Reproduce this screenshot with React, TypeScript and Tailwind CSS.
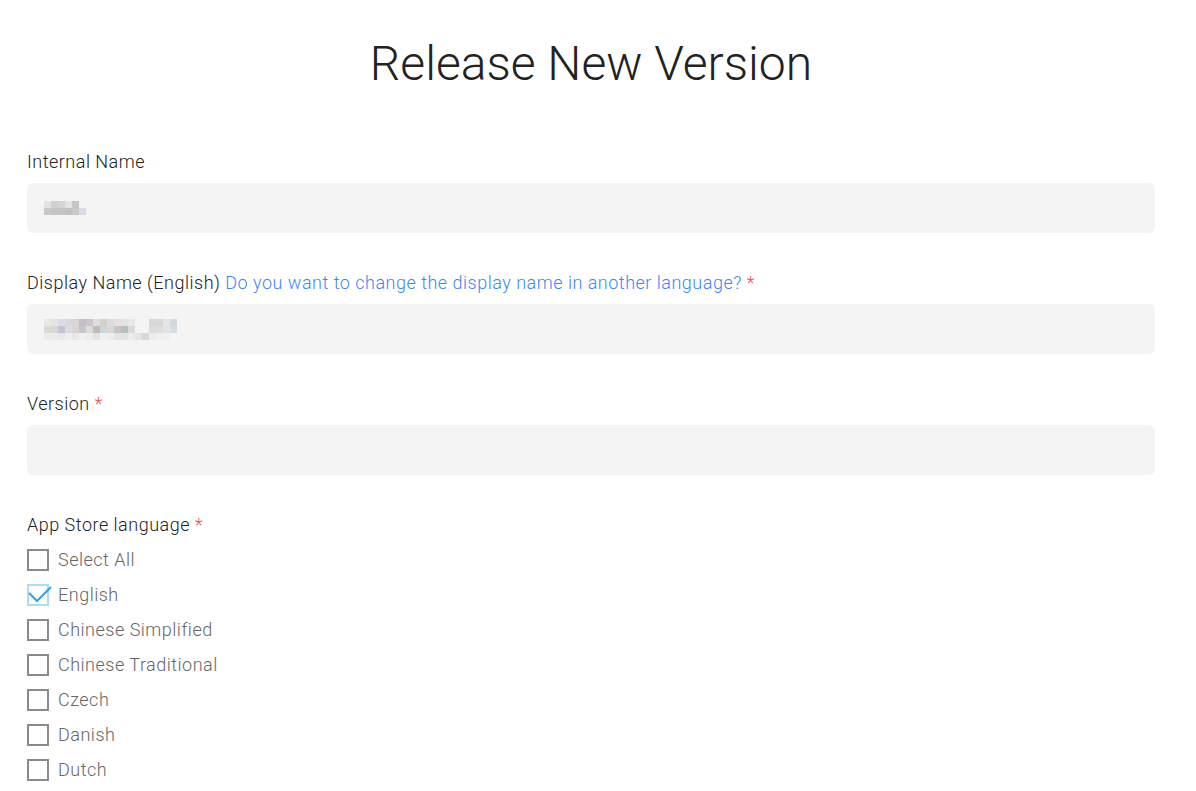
import React from "react";

const internalRows: string[][] = [
  ["#e6e0e0", "#cdd0d4", "#d8d4d2", "#e2e6ec", "#c4c4c4"],
  ["#c8c8c8", "#c4c4c4", "#c8c4c4", "#c0c0c0", "#c8c8cc", "#d8dce4"],
];

const displayRows: string[][] = [
  ["#e8e8e8", "#e4e4e0", "#dcdce4", "#d8d8dc", "#d8d4d8", "#c8bcc8", "#cdc4cc", "#e0dce4", "#d4d0c8", "#dcdcdc", "#e4e0e0", "#e4e4e4", "#e8e8e8", "#f4f4f4", "#f4f4f4", "#d8d8d8", "#d8d8d8", "#e8e4e4", "#d0d8e0"],
  ["#dcd8d8", "#d8d8dc", "#c4c4d4", "#dcdcdc", "#d8d4d4", "#c8c4c8", "#dcdcdc", "#c0bcb4", "#ccd4dc", "#d8d8d4", "#c8c4c4", "#b4c0bc", "#d8d8d4", "#f4f4f4", "#f4f4f4", "#dcdcdc", "#e0dcdc", "#e4e4e4", "#d4dce4"],
  ["#ecece8", "#ecebec", "#e8e8ec", "#ecedec", "#e8e8e8", "#f0f0f0", "#ececec", "#e4e4e4", "#f0f0f0", "#eceded", "#e4e4e4", "#e0e4e0", "#ececec", "#e4e4e4", "#d8d8d8", "#ececec", "#f0f0f0", "#f0f0f0"],
];

function Pixels({ rows }: { rows: string[][] }) {
  return (
    <div className="flex flex-col">
      {rows.map((r, i) => (
        <div key={i} className="flex">
          {r.map((c, j) => (
            <div key={j} className="w-[7px] h-[7px]" style={{ backgroundColor: c }} />
          ))}
        </div>
      ))}
    </div>
  );
}

const Star = () => <span className="text-[#e8505b]"> *</span>;

function Label({ children }: { children: React.ReactNode }) {
  return (
    <div className="text-[18px] leading-[27px] font-light tracking-[0.5px] text-[#222222] mb-[8px]">{children}</div>
  );
}

function Input({ children }: { children?: React.ReactNode }) {
  return (
    <div className="h-[50px] rounded-[6px] bg-[#f4f4f4] flex items-center pl-[17px]">{children}</div>
  );
}

const languages = [
  { name: "Select All", checked: false },
  { name: "English", checked: true },
  { name: "Chinese Simplified", checked: false },
  { name: "Chinese Traditional", checked: false },
  { name: "Czech", checked: false },
  { name: "Danish", checked: false },
  { name: "Dutch", checked: false },
];

function Checkbox({ checked }: { checked: boolean }) {
  if (checked) {
    return (
      <div className="relative w-[22px] h-[22px] border-2 border-[#aadcf6] shrink-0">
        <svg className="absolute left-[-1px] top-[-3px] overflow-visible" width="24" height="24" viewBox="0 0 24 24">
          <path d="M1 10 L9 18 L23 4" fill="none" stroke="#3ba1e6" strokeWidth="2.2" />
        </svg>
      </div>
    );
  }
  return <div className="w-[22px] h-[22px] border-2 border-[#8a8a8a] shrink-0" />;
}

export default function App() {
  return (
    <div className="bg-white min-h-[791px] font-['Roboto',sans-serif]">
      <div className="ml-[27px] w-[1128px] pt-[36px]">
        <h1 className="text-center text-[48px] leading-[56px] font-light text-[#222222]">Release New Version</h1>
        <div className="mt-[56px] flex flex-col gap-[36px]">
          <div>
            <Label>Internal Name</Label>
            <Input>
              <Pixels rows={internalRows} />
            </Input>
          </div>
          <div>
            <Label>
              Display Name (English){" "}
              <span className="text-[#3d86f4]">Do you want to change the display name in another language?</span>
              <Star />
            </Label>
            <Input>
              <Pixels rows={displayRows} />
            </Input>
          </div>
          <div>
            <Label>
              Version
              <Star />
            </Label>
            <Input />
          </div>
          <div>
            <div className="text-[18px] leading-[27px] font-light tracking-[0.5px] text-[#222222] mb-[4px]">
              App Store language
              <Star />
            </div>
            <div className="flex flex-col">
              {languages.map((l) => (
                <div key={l.name} className="h-[35px] flex items-center gap-[9px]">
                  <Checkbox checked={l.checked} />
                  <span className="text-[18px] font-light tracking-[0.5px] text-[#666666]">{l.name}</span>
                </div>
              ))}
            </div>
          </div>
        </div>
      </div>
    </div>
  );
}
